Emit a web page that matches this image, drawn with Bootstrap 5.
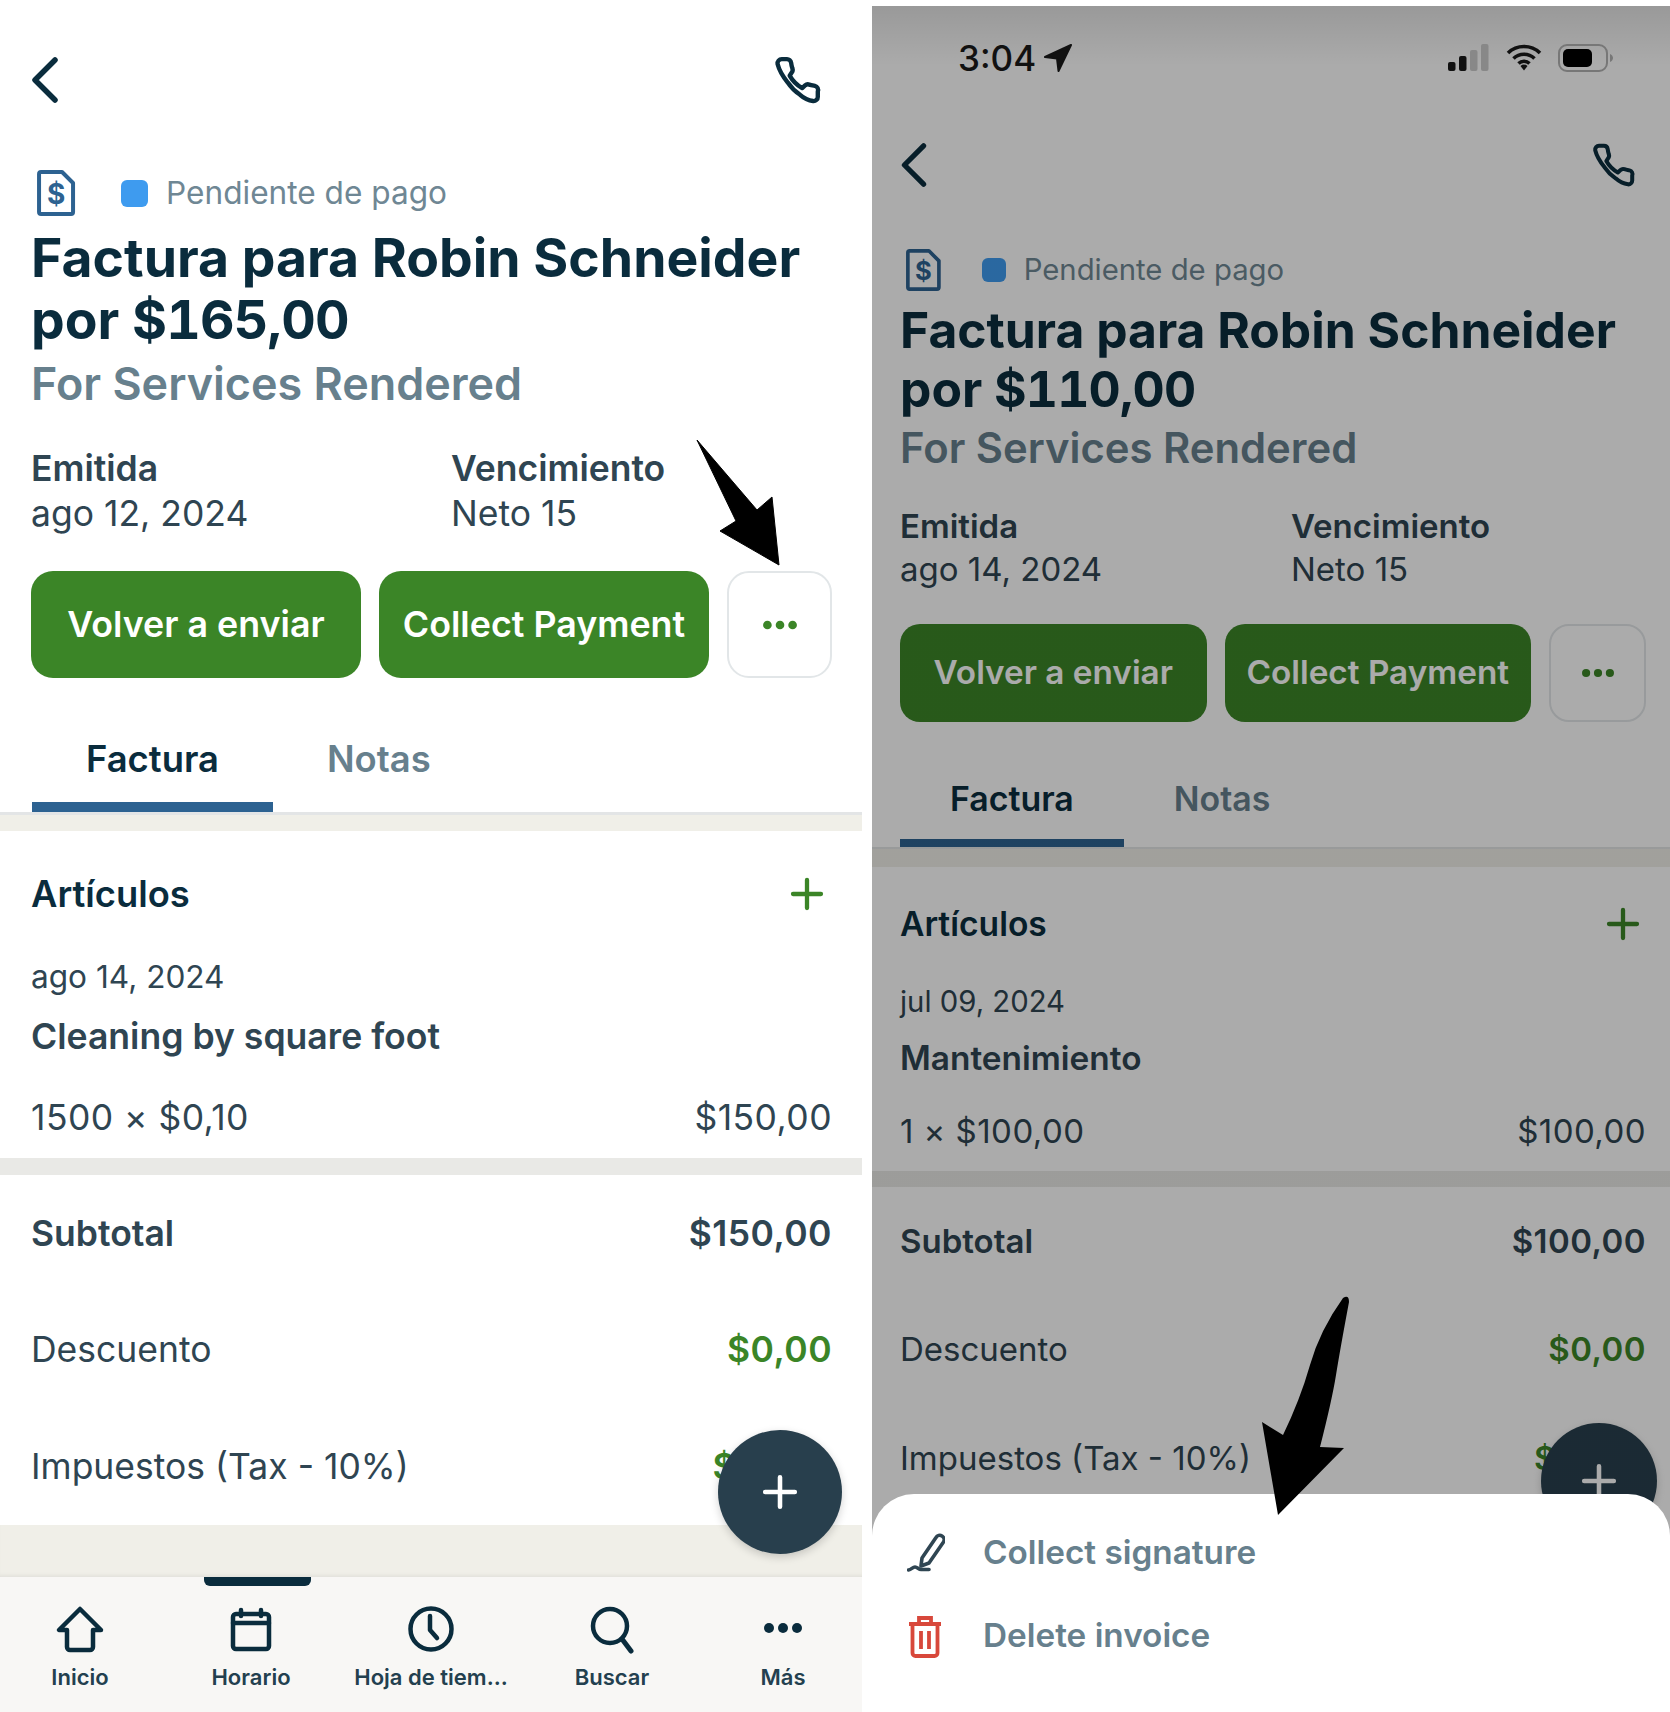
<!DOCTYPE html>
<html lang="es">
<head>
<meta charset="utf-8">
<title>Factura</title>
<link href="https://cdn.jsdelivr.net/npm/bootstrap@5.3.0/dist/css/bootstrap.min.css" rel="stylesheet">
<style>
html,body{height:1712px;overflow:hidden;background:#fff}
body{font-family:Inter,"Liberation Sans",sans-serif;color:#2f4552;position:relative}
.stage{height:1712px;width:1670px}
.phone{position:relative;overflow:hidden;background:#fff;flex:none}
.pl{width:862px;height:1712px;margin-right:10px;
 --t:53.5px;--tl:62px;--subf:44.9px;--subl:50px;--bf:35.5px;--small:31.6px;--pad:31px;--padr:30px;
 --navh:160px;--navmb:0px;--sth:66px;--stmb:1px;--subt:8px;--metat:37px;--metal:45px;--venc:420px;
 --btnt:35px;--btnh:107px;--btnf:35.8px;--btnr:22px;--more:105px;--gap:18px;
 --tabt:61px;--tabl:40px;--tabpb:23px;--tabb:10px;--tabp:54px;--tabf:36.4px;--bar:3px;
 --b1:16px;--h1:126px;--h2:40px;--h3:80px;--h4:81px;--b2:17px;--row:116.5px;--itemf:35.6px;--headf:36.3px;
 --back:46px;--call:50px;--doc:46px;--sq:27px;--dg:45px;--sqg:18px}
.pr{width:798px;height:1706px;margin-top:6px;
 --t:49.8px;--tl:58.5px;--subf:41.8px;--subl:46px;--bf:33px;--small:29.3px;--pad:28px;--padr:24px;
 --navh:110px;--navmb:19px;--sth:62px;--stmb:0px;--subt:7px;--metat:34px;--metal:43px;--venc:391px;
 --btnt:33px;--btnh:98px;--btnf:33.3px;--btnr:20px;--more:97px;--gap:18px;
 --tabt:58px;--tabl:38px;--tabpb:21px;--tabb:8px;--tabp:50px;--tabf:33.9px;--bar:2px;
 --b1:18px;--h1:114px;--h2:42px;--h3:70px;--h4:78px;--b2:16px;--row:108.5px;--itemf:33.4px;--headf:33.6px;
 --back:44px;--call:46px;--doc:42px;--sq:24px;--dg:40px;--sqg:18px}
.inset{padding-left:var(--pad);padding-right:var(--padr)}
.dark{color:#0a2c3d}
.statusbar{height:104px;position:relative;z-index:2;color:#111;padding:0 56px 0 86px;font-size:35px;font-weight:500;font-family:Inter,sans-serif}
.topnav{height:var(--navh);margin-bottom:var(--navmb)}
.topnav .ico-back{height:var(--back);width:28px}
.topnav .ico-call{height:var(--call);width:var(--call);margin-right:9px}
.staterow{height:var(--sth);margin-bottom:var(--stmb);font-size:var(--small);color:#6f8794}
.pr .staterow{font-size:29.3px}
.ico-doc{height:var(--doc);width:calc(var(--doc)*.85);margin-left:6px;margin-right:var(--dg)}
.sq{width:var(--sq);height:var(--sq);border-radius:6px;background:#3e9bef;margin-right:var(--sqg)}
.head1{font-size:var(--t);line-height:var(--tl);font-weight:700;color:#0a2c3d}
.tnum{font-variant-numeric:tabular-nums;letter-spacing:-.8px}
.num{letter-spacing:.45px}
.head2{font-size:var(--subf);line-height:var(--subl);font-weight:600;color:#67808d;margin-top:var(--subt)}
.meta{margin-top:var(--metat);font-size:var(--bf);line-height:var(--metal)}
.meta-a{width:var(--venc)}
.meta b{font-weight:600;display:block}
.btnrow{margin-top:var(--btnt);gap:var(--gap);height:var(--btnh)}
.btn.act{flex:1 1 0;background:#3b8527;border:0;color:#fff;font-size:var(--btnf);font-weight:600;border-radius:var(--btnr);padding:0;white-space:nowrap}
.btn.more{flex:none;width:var(--more);background:#fff;border:2px solid #e2e6e8;border-radius:var(--btnr);padding:0}
.tabs{border-bottom:var(--bar) solid #e3e5e6;padding-top:var(--tabt)}
.tabx{padding:0 var(--tabp) var(--tabpb);border-bottom:var(--tabb) solid transparent;font-size:var(--tabf);line-height:var(--tabl);font-weight:600;color:#67808d;margin-bottom:0}
.tabx.on{color:#0a2c3d;border-bottom-color:#2d6291}
.band1{height:var(--b1);background:#f0efe8}
.band2{height:var(--b2);background:#e9e9e6}
.band3{height:52px;background:#f0efe8;box-shadow:inset 0 -4px 4px -3px rgba(0,0,0,.08)}
.r1{height:var(--h1);font-size:var(--headf);font-weight:600;color:#0a2c3d}
.r2{height:var(--h2);font-size:var(--small)}
.r3{height:var(--h3);font-size:var(--itemf);font-weight:600}
.r4{height:var(--h4);font-size:var(--bf)}
.ico-plus{width:34px;height:34px;margin-right:8px}
.sumrow{height:var(--row);font-size:var(--bf)}
.sumrow b{font-weight:600}
.ok{color:#3b8527}
.fab{position:absolute;border-radius:50%;background:#283f4d;box-shadow:0 3px 8px rgba(0,0,0,.18);z-index:1}
.pl .fab{left:718px;top:1430px;width:124px;height:124px}
.pr .fab{left:669px;top:1417px;width:116px;height:116px}
.fab svg{width:36px;height:36px}
.tabbar{height:135px;background:#f8f7f5;display:grid;grid-template-columns:160px 182px 178px 184px 158px;position:relative}
.mark-on{position:absolute;left:204px;top:0;width:107px;height:9px;background:#0a2c3d;border-radius:0 0 6px 6px}
.navx{padding-top:26px;font-size:22px;font-weight:600;line-height:30px;white-space:nowrap;color:#23404f}
.navx svg{width:56px;height:52px;margin-bottom:7px;color:#0a2c3d}
.scrim{position:absolute;inset:0;z-index:1;background:linear-gradient(rgba(0,0,0,.4),rgba(0,0,0,.33) 60px)}
.sheet{position:absolute;left:0;right:0;bottom:0;height:218px;background:#fff;border-radius:42px 42px 0 0;z-index:3;padding:17px 0 0 35px}
.sheetrow{height:83px;font-size:33.3px;font-weight:600;color:#67808d}
.sheetrow svg{width:38px;height:46px;margin-right:38px;flex:none}
.annot{position:absolute;left:0;top:0;width:1670px;height:1712px;z-index:5;pointer-events:none}
.sbicons svg{display:block}
</style>
</head>
<body>
<svg class="d-none" xmlns="http://www.w3.org/2000/svg">
 <symbol id="i-back" viewBox="0 0 28 46"><path d="M24 3 4 23l20 20" fill="none" stroke="currentColor" stroke-width="5.500" stroke-linecap="round" stroke-linejoin="round"/></symbol>
 <symbol id="i-call" viewBox="0 0 24 24"><path d="M21.500 17.500v2.600a2 2 0 0 1-2.200 2c-2.200-.3-4.400-1.300-6.300-3-2.400-1.600-4.400-3.600-6-6-2.400-3-4.100-6-4.800-8.800A2 2 0 0 1 4.200 2h2.500a2 2 0 0 1 2 1.700c.1.900.3 1.800.6 2.700a2 2 0 0 1-.4 2.100L8 9.900a16 16 0 0 0 6 6l1.400-1.300a2 2 0 0 1 2-.4c.9.300 1.600.4 2.700.6a2 2 0 0 1 1.400 2.700z" fill="none" stroke="currentColor" stroke-width="2.100" stroke-linejoin="round"/></symbol>
 <symbol id="i-doc" viewBox="0 0 39 46"><path d="M4 2h21l11 11v29a2 2 0 0 1-2 2H4a2 2 0 0 1-2-2V4a2 2 0 0 1 2-2z" fill="none" stroke="#2d6291" stroke-width="4" stroke-linejoin="round"/><text x="19" y="34" text-anchor="middle" font-family="Inter,sans-serif" font-weight="700" font-size="28" fill="#2d6291">$</text></symbol>
 <symbol id="i-dots" viewBox="0 0 40 12"><circle cx="6" cy="6" r="4.800" fill="currentColor"/><circle cx="20" cy="6" r="4.800" fill="currentColor"/><circle cx="34" cy="6" r="4.800" fill="currentColor"/></symbol>
 <symbol id="i-plus" viewBox="0 0 34 34"><path d="M17 3v28M3 17h28" fill="none" stroke="currentColor" stroke-width="4.300" stroke-linecap="round"/></symbol>
 <symbol id="i-home" viewBox="0 0 56 52"><path d="M28 6 7 27h8v17a3 3 0 0 0 3 3h20a3 3 0 0 0 3-3V27h8z" fill="none" stroke="currentColor" stroke-width="4.500" stroke-linejoin="round"/></symbol>
 <symbol id="i-cal" viewBox="0 0 56 52"><rect x="10" y="11" width="36" height="35" rx="3" fill="none" stroke="currentColor" stroke-width="4.500"/><path d="M10 20h36M18 7v6M38 7v6" fill="none" stroke="currentColor" stroke-width="4.500" stroke-linecap="round"/></symbol>
 <symbol id="i-clock" viewBox="0 0 56 52"><circle cx="28" cy="26" r="20.500" fill="none" stroke="currentColor" stroke-width="4.500"/><path d="M27 13v14l7 8" fill="none" stroke="currentColor" stroke-width="4.500" stroke-linecap="round" stroke-linejoin="round"/></symbol>
 <symbol id="i-search" viewBox="0 0 56 52"><circle cx="26" cy="23" r="17" fill="none" stroke="currentColor" stroke-width="4.500"/><path d="m38 36 9 12" fill="none" stroke="currentColor" stroke-width="5" stroke-linecap="round"/></symbol>
 <symbol id="i-more" viewBox="0 0 56 52"><circle cx="14" cy="25" r="5" fill="currentColor"/><circle cx="28" cy="25" r="5" fill="currentColor"/><circle cx="42" cy="25" r="5" fill="currentColor"/></symbol>
</svg>

<div class="stage d-flex align-items-start">

<!-- LEFT -->
<section class="phone pl">
  <div class="topnav inset d-flex justify-content-between align-items-center dark">
    <svg class="ico-back"><use href="#i-back"/></svg>
    <svg class="ico-call" style="color:#0a2c3d"><use href="#i-call"/></svg>
  </div>
  <div class="staterow inset d-flex align-items-center">
    <svg class="ico-doc"><use href="#i-doc"/></svg><span class="sq"></span><span>Pendiente de pago</span>
  </div>
  <div class="inset">
    <div class="head1">Factura para Robin Schneider<br>por <span class="tnum">$165,00</span></div>
    <div class="head2">For Services Rendered</div>
    <div class="meta d-flex">
      <div class="meta-a"><b>Emitida</b>ago 12, 2024</div>
      <div><b>Vencimiento</b>Neto 15</div>
    </div>
    <div class="btnrow d-flex">
      <button class="btn act">Volver a enviar</button>
      <button class="btn act">Collect Payment</button>
      <button class="btn more d-flex align-items-center justify-content-center"><svg width="36" height="12" class="ok"><use href="#i-dots"/></svg></button>
    </div>
  </div>
  <div class="tabs d-flex" style="padding-left:32px">
    <div class="tabx on">Factura</div><div class="tabx">Notas</div>
  </div>
  <div class="band1"></div>
  <div class="inset">
    <div class="r1 d-flex justify-content-between align-items-center"><span>Artículos</span><svg class="ico-plus ok"><use href="#i-plus"/></svg></div>
    <div class="r2 d-flex align-items-center">ago 14, 2024</div>
    <div class="r3 d-flex align-items-center">Cleaning by square foot</div>
    <div class="r4 d-flex justify-content-between align-items-center"><span class="num">1500 × $0,10</span><span class="num">$150,00</span></div>
  </div>
  <div class="band2"></div>
  <div class="inset">
    <div class="sumrow d-flex justify-content-between align-items-center"><b>Subtotal</b><b class="num">$150,00</b></div>
    <div class="sumrow d-flex justify-content-between align-items-center"><span>Descuento</span><b class="ok num">$0,00</b></div>
    <div class="sumrow d-flex justify-content-between align-items-center"><span>Impuestos (Tax - 10%)</span><b class="ok num">$15,00</b></div>
  </div>
  <div class="band3"></div>
  <nav class="tabbar">
    <span class="mark-on"></span>
    <div class="navx d-flex flex-column align-items-center"><svg><use href="#i-home"/></svg>Inicio</div>
    <div class="navx d-flex flex-column align-items-center"><svg><use href="#i-cal"/></svg>Horario</div>
    <div class="navx d-flex flex-column align-items-center"><svg><use href="#i-clock"/></svg>Hoja de tiem...</div>
    <div class="navx d-flex flex-column align-items-center"><svg><use href="#i-search"/></svg>Buscar</div>
    <div class="navx d-flex flex-column align-items-center"><svg><use href="#i-more"/></svg>Más</div>
  </nav>
  <div class="fab d-flex align-items-center justify-content-center text-white"><svg><use href="#i-plus"/></svg></div>
</section>

<!-- RIGHT -->
<section class="phone pr">
  <div class="scrim"></div>
  <div class="statusbar d-flex justify-content-between align-items-center">
    <div class="d-flex align-items-center" style="gap:8px"><span>3:04</span>
      <svg width="28" height="28" viewBox="0 0 28 28"><path d="M27 1 1 13l12 1.500 1.500 12.500z" fill="#111" stroke="#111" stroke-width="2" stroke-linejoin="round"/></svg>
    </div>
    <div class="sbicons d-flex align-items-center" style="gap:16px">
      <svg width="42" height="28" viewBox="0 0 42 28"><rect x="0" y="18" width="7.500" height="9" rx="2" fill="#111"/><rect x="11" y="12" width="7.500" height="15" rx="2" fill="#111"/><rect x="22" y="6" width="7.500" height="21" rx="2" fill="#888"/><rect x="33" y="0" width="7.500" height="27" rx="2" fill="#888"/></svg>
      <svg width="36" height="28" viewBox="0 0 36 28"><path d="M2 9a23 23 0 0 1 32 0M7.500 14.500a15 15 0 0 1 21 0M12.500 19.500a8 8 0 0 1 11 0" fill="none" stroke="#111" stroke-width="3.600"/><path d="m14.500 22 3.500 4.500 3.500-4.500a5 5 0 0 0-7 0z" fill="#111"/></svg>
      <svg width="56" height="28" viewBox="0 0 56 28"><rect x="1" y="1" width="48" height="26" rx="8" fill="none" stroke="#777" stroke-width="2"/><rect x="5" y="5" width="29" height="18" rx="5" fill="#000"/><path d="M52 10c2 1 3 2.500 3 4s-1 3-3 4z" fill="#777"/></svg>
    </div>
  </div>
  <div class="topnav inset d-flex justify-content-between align-items-center dark">
    <svg class="ico-back"><use href="#i-back"/></svg>
    <svg class="ico-call" style="color:#0a2c3d"><use href="#i-call"/></svg>
  </div>
  <div class="staterow inset d-flex align-items-center">
    <svg class="ico-doc"><use href="#i-doc"/></svg><span class="sq"></span><span>Pendiente de pago</span>
  </div>
  <div class="inset">
    <div class="head1">Factura para Robin Schneider<br>por <span class="tnum">$110,00</span></div>
    <div class="head2">For Services Rendered</div>
    <div class="meta d-flex">
      <div class="meta-a"><b>Emitida</b>ago 14, 2024</div>
      <div><b>Vencimiento</b>Neto 15</div>
    </div>
    <div class="btnrow d-flex">
      <button class="btn act">Volver a enviar</button>
      <button class="btn act">Collect Payment</button>
      <button class="btn more d-flex align-items-center justify-content-center"><svg width="34" height="12" class="ok"><use href="#i-dots"/></svg></button>
    </div>
  </div>
  <div class="tabs d-flex" style="padding-left:28px">
    <div class="tabx on">Factura</div><div class="tabx">Notas</div>
  </div>
  <div class="band1"></div>
  <div class="inset">
    <div class="r1 d-flex justify-content-between align-items-center"><span>Artículos</span><svg class="ico-plus ok" style="margin-right:6px"><use href="#i-plus"/></svg></div>
    <div class="r2 d-flex align-items-center">jul 09, 2024</div>
    <div class="r3 d-flex align-items-center">Mantenimiento</div>
    <div class="r4 d-flex justify-content-between align-items-center"><span class="num">1 × $100,00</span><span class="num">$100,00</span></div>
  </div>
  <div class="band2"></div>
  <div class="inset">
    <div class="sumrow d-flex justify-content-between align-items-center"><b>Subtotal</b><b class="num">$100,00</b></div>
    <div class="sumrow d-flex justify-content-between align-items-center"><span>Descuento</span><b class="ok num">$0,00</b></div>
    <div class="sumrow d-flex justify-content-between align-items-center"><span>Impuestos (Tax - 10%)</span><b class="ok num">$10,00</b></div>
  </div>
  <div class="fab d-flex align-items-center justify-content-center text-white" style="z-index:0"><svg><use href="#i-plus"/></svg></div>
  <div class="sheet">
    <div class="sheetrow d-flex align-items-center">
      <svg viewBox="0 0 38 46"><path d="M29 7.500a3.500 3.500 0 0 1 7.500 4.500L22 33l-8 3 1-8z" fill="none" stroke="#2f4552" stroke-width="3.600" stroke-linejoin="round"/><path d="M1.500 40c3-.5 4-3 6.500-3s3.500 2.500 6 2.500h8" fill="none" stroke="#2f4552" stroke-width="3.600" stroke-linecap="round"/></svg>
      Collect signature
    </div>
    <div class="sheetrow d-flex align-items-center">
      <svg viewBox="0 0 38 46"><path d="M2 11h32M12 11V5h12v6M5.500 11v29a3 3 0 0 0 3 3h19a3 3 0 0 0 3-3V11M14 18v18M22 18v18" fill="none" stroke="#d8483b" stroke-width="3.800"/></svg>
      Delete invoice
    </div>
  </div>
</section>
</div>

<svg class="annot" viewBox="0 0 1670 1712">
  <path d="M697 440 757 510 772 497 779 565 720 531 736 521Z" fill="#000" stroke="#000" stroke-linejoin="round"/>
  <path d="M1343 1298Q1349 1294 1349 1302Q1340 1350 1336 1375T1320 1447L1344 1448 1278 1515 1262 1422 1283 1435Q1300 1400 1310 1365T1343 1298Z" fill="#000"/>
</svg>
<script src="https://cdn.jsdelivr.net/npm/bootstrap@5.3.0/dist/js/bootstrap.bundle.min.js"></script>
</body>
</html>
